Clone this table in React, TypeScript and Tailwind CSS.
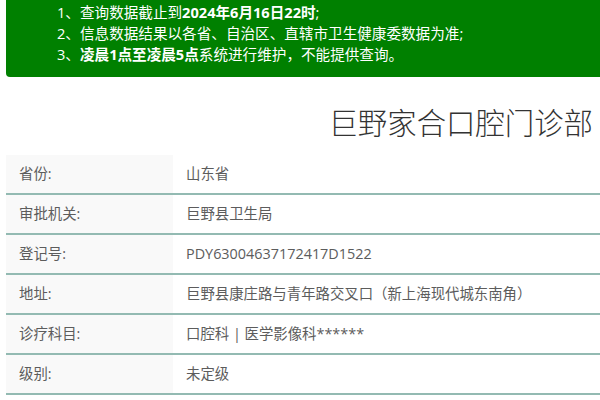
import React from "react";

const rows: [string, string][] = [
  ["省份:", "山东省"],
  ["审批机关:", "巨野县卫生局"],
  ["登记号:", "PDY63004637172417D1522"],
  ["地址:", "巨野县康庄路与青年路交叉口（新上海现代城东南角）"],
  ["诊疗科目:", "口腔科 | 医学影像科******"],
  ["级别:", "未定级"],
];

export default function App() {
  return (
    <div
      className="w-[600px] h-[400px] overflow-hidden bg-white"
      style={{ fontFamily: '"Open Sans", "Noto Sans CJK SC", sans-serif' }}
    >
      <div className="ml-[6px] w-[620px] bg-[#008000] rounded-bl-[4px] pt-[2px] pb-[12px] pl-[51px] text-white text-[14.6px] leading-[21px]">
        <div>
          1、查询数据截止到<b>2024年6月16日22时</b>;
        </div>
        <div>2、信息数据结果以各省、自治区、直辖市卫生健康委数据为准;</div>
        <div>
          3、<b>凌晨1点至凌晨5点</b>系统进行维护，不能提供查询。
        </div>
      </div>
      <div className="flex justify-end pr-[7px] mt-[26px] mb-[12px]">
        <h1 className="text-[29.4px] leading-[40px] font-light text-[#333]">
          巨野家合口腔门诊部
        </h1>
      </div>
      <div className="ml-[6px] w-[594px] text-[14.4px] text-[#5c5c5c]">
        {rows.map(([k, v]) => (
          <div key={k} className="flex h-[40px] border-b-2 border-[#93bab2]">
            <div className="w-[167px] bg-[#f9f9f9] flex items-center pl-[13px]">{k}</div>
            <div className="flex-1 flex items-center pl-[13px]">{v}</div>
          </div>
        ))}
      </div>
    </div>
  );
}
